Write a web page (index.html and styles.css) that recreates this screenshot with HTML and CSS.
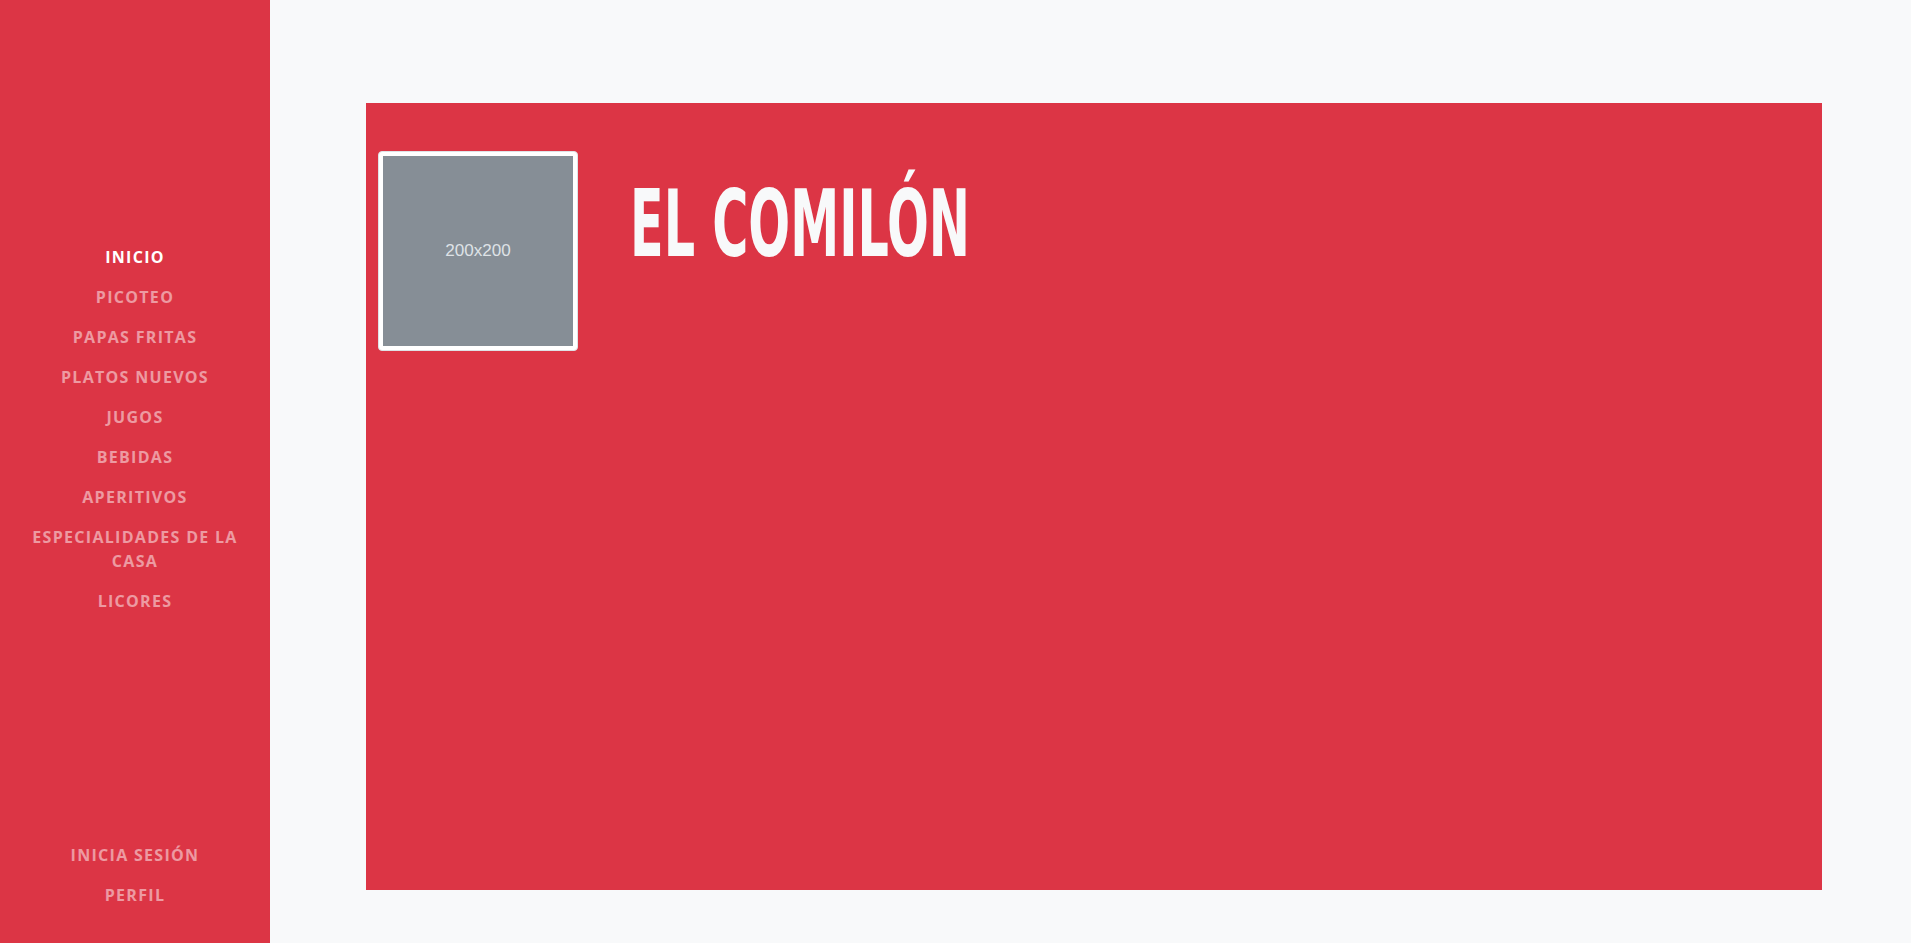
FILE: index.html
```html
<!DOCTYPE html>
<html lang="es">
<head>
<meta charset="utf-8">
<title>El Comilón</title>
<link rel="stylesheet" href="styles.css">
</head>
<body>
<div class="layout">
  <aside class="sidebar">
    <nav class="nav nav-main">
      <a class="nav-link active" href="#">Inicio</a>
      <a class="nav-link" href="#">Picoteo</a>
      <a class="nav-link" href="#">Papas fritas</a>
      <a class="nav-link" href="#">Platos nuevos</a>
      <a class="nav-link" href="#">Jugos</a>
      <a class="nav-link" href="#">Bebidas</a>
      <a class="nav-link" href="#">Aperitivos</a>
      <a class="nav-link" href="#">Especialidades de la casa</a>
      <a class="nav-link" href="#">Licores</a>
    </nav>
    <nav class="nav nav-bottom">
      <a class="nav-link" href="#">Inicia sesión</a>
      <a class="nav-link" href="#">Perfil</a>
    </nav>
  </aside>
  <main class="main">
    <section class="card">
      <div class="header">
        <div class="thumbnail">
          <svg class="placeholder" viewBox="0 0 200 200" width="190" height="190">
            <rect width="200" height="200" fill="#868e96"/>
            <text x="100" y="105" text-anchor="middle" class="ph-text">200x200</text>
          </svg>
        </div>
        <h1 class="title"><span class="title-text">EL COMILÓN</span></h1>
      </div>
    </section>
  </main>
</div>
</body>
</html>
```

FILE: styles.css
```css
* { box-sizing: border-box; }
html, body { margin: 0; padding: 0; }
body {
  background: #f8f9fa;
  font-family: "Open Sans", "DejaVu Sans", sans-serif;
  width: 1911px;
  height: 943px;
  overflow: hidden;
}
.layout {
  display: flex;
  height: 943px;
}
.sidebar {
  width: 270px;
  flex: none;
  background: #dc3545;
  display: flex;
  flex-direction: column;
  justify-content: space-between;
  padding: 237px 0 28px;
}
.nav {
  display: flex;
  flex-direction: column;
}
.nav-link {
  display: block;
  padding: 8px 16px;
  font-size: 16px;
  line-height: 24px;
  font-weight: 700;
  text-transform: uppercase;
  letter-spacing: 1.3px;
  text-align: center;
  text-decoration: none;
  color: rgba(255, 255, 255, 0.5);
}
.nav-link.active { color: #fff; }
.main {
  flex: 1;
  padding: 103px 89px 53px 96px;
  display: flex;
}
.card {
  flex: 1;
  background: #dc3545;
  padding: 48px 12px;
}
.header {
  display: flex;
  align-items: flex-start;
}
.thumbnail {
  flex: none;
  padding: 4px;
  background: #fff;
  border: 1px solid #dee2e6;
  border-radius: 4px;
  line-height: 0;
}
.placeholder { display: block; }
.ph-text {
  font-family: "Liberation Sans", Arial, sans-serif;
  font-size: 18px;
  fill: #dee2e6;
}
.title {
  margin: 19px 0 0 52px;
  font-family: "DejaVu Sans Condensed", "DejaVu Sans", sans-serif;
  font-weight: 700;
  font-size: 92px;
  line-height: 1.2;
  color: #f8f9fa;
}
.title-text {
  display: inline-block;
  transform: scaleX(0.595);
  transform-origin: left center;
  white-space: nowrap;
}
```
